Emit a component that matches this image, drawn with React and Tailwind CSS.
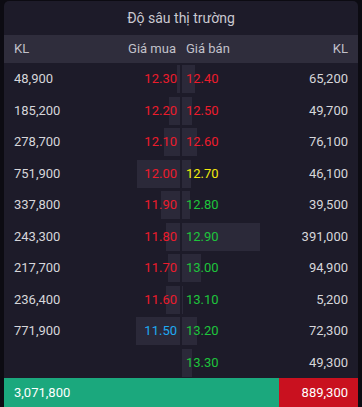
import React from 'react';

const rows = [
  { bq: '48,900', bp: '12.30', bc: 'text-[#ec1c2c]', bw: 3, sp: '12.40', sc: 'text-[#ec1c2c]', sw: 13, sq: '65,200' },
  { bq: '185,200', bp: '12.20', bc: 'text-[#ec1c2c]', bw: 11, sp: '12.50', sc: 'text-[#ec1c2c]', sw: 10, sq: '49,700' },
  { bq: '278,700', bp: '12.10', bc: 'text-[#ec1c2c]', bw: 16, sp: '12.60', sc: 'text-[#ec1c2c]', sw: 15, sq: '76,100' },
  { bq: '751,900', bp: '12.00', bc: 'text-[#ec1c2c]', bw: 43, sp: '12.70', sc: 'text-[#f2ea0c]', sw: 9, sq: '46,100' },
  { bq: '337,800', bp: '11.90', bc: 'text-[#ec1c2c]', bw: 19, sp: '12.80', sc: 'text-[#1ec43c]', sw: 8, sq: '39,500' },
  { bq: '243,300', bp: '11.80', bc: 'text-[#ec1c2c]', bw: 14, sp: '12.90', sc: 'text-[#1ec43c]', sw: 78, sq: '391,000' },
  { bq: '217,700', bp: '11.70', bc: 'text-[#ec1c2c]', bw: 12, sp: '13.00', sc: 'text-[#1ec43c]', sw: 19, sq: '94,900' },
  { bq: '236,400', bp: '11.60', bc: 'text-[#ec1c2c]', bw: 14, sp: '13.10', sc: 'text-[#1ec43c]', sw: 1, sq: '5,200' },
  { bq: '771,900', bp: '11.50', bc: 'text-[#1fa9f2]', bw: 44, sp: '13.20', sc: 'text-[#1ec43c]', sw: 15, sq: '72,300' },
  { bq: '', bp: '', bc: '', bw: 0, sp: '13.30', sc: 'text-[#1ec43c]', sw: 10, sq: '49,300' },
];

const App = () => {
  return (
    <div className="w-[362px] h-[407px] bg-[#0c0b12] px-[4px] pt-[1px] overflow-hidden" style={{ fontFamily: 'Roboto, "Noto Sans", sans-serif' }}>
      <div className="bg-[#1d1b29] rounded-t-[5px] flex flex-col">
        <div className="h-[34px] flex items-center justify-center text-[14px] text-[#c9c8d0]">
          Độ sâu thị trường
        </div>
        <div className="h-[28px] bg-[#2f2d3c] flex items-center text-[13px] text-[#c2c1ca]">
          <div className="w-[176px] flex justify-between pl-[10px] pr-[4px]">
            <span>KL</span>
            <span>Giá mua</span>
          </div>
          <div className="w-[2px]" />
          <div className="w-[176px] flex justify-between pl-[4px] pr-[10px]">
            <span>Giá bán</span>
            <span>KL</span>
          </div>
        </div>
        {rows.map((r, i) => (
          <div key={i} className="h-[31.5px] flex text-[13px] text-[#d6d6da]">
            <div className="w-[176px] relative flex items-center justify-between pl-[10px] pr-[3px]">
              {r.bw > 0 && (
                <div className="absolute right-0 top-[2px] h-[28px] bg-[#2b2939]" style={{ width: r.bw }} />
              )}
              <span className="relative">{r.bq}</span>
              <span className={`relative ${r.bc}`}>{r.bp}</span>
            </div>
            <div className="w-[2px]" />
            <div className="w-[176px] relative flex items-center justify-between pl-[4px] pr-[10px]">
              <div className="absolute left-0 top-[2px] h-[28px] bg-[#2b2939]" style={{ width: r.sw }} />
              <span className={`relative ${r.sc}`}>{r.sp}</span>
              <span className="relative">{r.sq}</span>
            </div>
          </div>
        ))}
        <div className="h-[29px] flex text-[13px] text-white">
          <div className="flex-1 bg-[#1ba87d] flex items-center pl-[10px]">3,071,800</div>
          <div className="w-[79px] bg-[#c9111f] flex items-center justify-end pr-[10px]">889,300</div>
        </div>
      </div>
    </div>
  );
};

export default App;
